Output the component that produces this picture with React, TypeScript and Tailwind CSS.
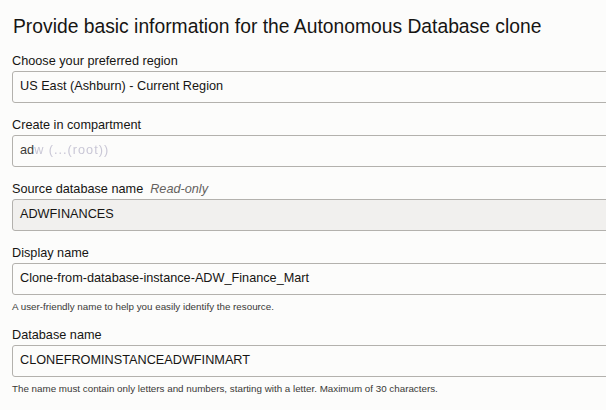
const fieldBox =
  "h-[32px] w-[620px] rounded-[3px] border border-[#b3b1ad] flex items-center pl-[7px] text-[12.7px] text-[#161513]";

function Field({
  label,
  hint,
  value,
  readOnly,
  note,
  mt,
}: {
  label: string;
  hint?: string;
  value: React.ReactNode;
  readOnly?: boolean;
  note?: string;
  mt: string;
}) {
  return (
    <div className={mt}>
      <div className="h-[18px] pt-[2px] flex items-center text-[12.7px] text-[#161513]">
        {label}
        {hint && <span className="ml-[7px] italic text-[#65625e]">{hint}</span>}
      </div>
      <div className={`${fieldBox} mt-[1px] ${readOnly ? "bg-[#f1f0ee]" : "bg-[#fcfcfb]"}`}>
        {value}
      </div>
      {note && (
        <div className="mt-[6px] h-[12px] flex items-center text-[9.8px] text-[#3a3936]">{note}</div>
      )}
    </div>
  );
}

export default function App() {
  return (
    <div
      className="w-[606px] h-[410px] overflow-hidden bg-[#fcfcfb] pl-[12px]"
      style={{ fontFamily: '"Liberation Sans", Arial, sans-serif' }}
    >
      <h1 className="pt-[13px] text-[19.3px] leading-[28px] text-[#161513] pl-[1px]">
        Provide basic information for the Autonomous Database clone
      </h1>
      <Field mt="mt-[11px]" label="Choose your preferred region" value="US East (Ashburn) - Current Region" />
      <Field
        mt="mt-[13px]"
        label="Create in compartment"
        value={
          <span>
            <span className="text-[#3d3b38]">ad</span>
            <span className="text-[#c9c7d6] tracking-[1px] blur-[0.5px]">w (...(root))</span>
          </span>
        }
      />
      <Field mt="mt-[13px]" label="Source database name" hint="Read-only" value="ADWFINANCES" readOnly />
      <Field
        mt="mt-[13px]"
        label="Display name"
        value="Clone-from-database-instance-ADW_Finance_Mart"
        note="A user-friendly name to help you easily identify the resource."
      />
      <Field
        mt="mt-[13px]"
        label="Database name"
        value="CLONEFROMINSTANCEADWFINMART"
        note="The name must contain only letters and numbers, starting with a letter. Maximum of 30 characters."
      />
    </div>
  );
}
